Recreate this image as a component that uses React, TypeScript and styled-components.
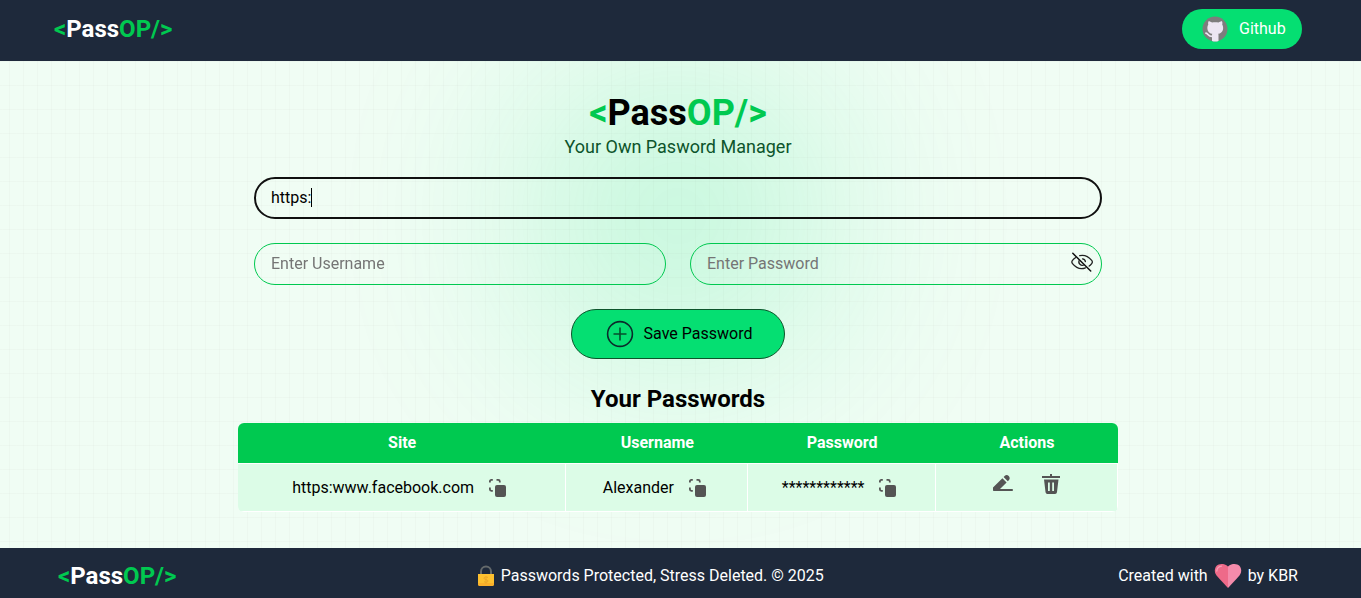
import React, { useState } from "react";
import styled, { createGlobalStyle } from "styled-components";

const GlobalStyle = createGlobalStyle`
  *, *::before, *::after { box-sizing: border-box; }
  body {
    margin: 0;
    font-family: Roboto, "Liberation Sans", sans-serif;
    font-size: 16px;
    line-height: 24px;
    color: #000;
  }
  button, input { font: inherit; color: inherit; }
  h1, h2, p { margin: 0; }
`;

const Page = styled.div`
  min-height: 100vh;
  display: flex;
  flex-direction: column;
`;

const Header = styled.header`
  background: #1e293b;
  color: #fff;
  display: flex;
  align-items: center;
  justify-content: space-between;
  padding: 9px 59px 12px 54px;
`;

const Brand = styled.div<{ $size?: "large" }>`
  font-weight: 700;
  font-size: ${(p) => (p.$size ? "36px" : "24px")};
  line-height: ${(p) => (p.$size ? "40px" : "32px")};
`;

const Accent = styled.span`
  color: #00c950;
`;

const GithubButton = styled.button`
  display: flex;
  align-items: center;
  gap: 10px;
  width: 120px;
  height: 40px;
  padding: 0 0 0 20px;
  border: 0;
  border-radius: 20px;
  background: #05df72;
  color: #fff;
  cursor: pointer;
`;

const Main = styled.main`
  position: relative;
  isolation: isolate;
  overflow: hidden;
  flex: 1;
  padding: 32px 5px 36px 0;
  background-color: #f0fdf4;
  background-image:
    linear-gradient(to right, #8080800a 1px, transparent 1px),
    linear-gradient(to bottom, #8080800a 1px, transparent 1px);
  background-size: 14px 24px;
  background-position: -5px 0;
`;

const Glow = styled.div`
  position: absolute;
  z-index: -1;
  top: 0;
  left: 0;
  right: 5px;
  margin: auto;
  width: 310px;
  height: 310px;
  border-radius: 50%;
  background: #05df72;
  opacity: 0.2;
  filter: blur(100px);
`;

const Content = styled.div`
  max-width: 880px;
  margin: 0 auto;
  text-align: center;
`;

const Tagline = styled.p`
  margin-top: 2px;
  font-size: 18px;
  line-height: 24px;
  color: #0d542b;
`;

const Form = styled.form`
  display: flex;
  flex-direction: column;
  align-items: center;
  gap: 24px;
  margin-top: 18px;
  padding: 0 16px;
`;

const FieldRow = styled.div`
  display: flex;
  gap: 24px;
  width: 100%;
`;

const Field = styled.label`
  position: relative;
  flex: 1;
  display: flex;
`;

const TextInput = styled.input<{ $ownCaret?: boolean }>`
  width: 100%;
  height: 42px;
  padding: 0 16px 2px;
  border: 1px solid #00c950;
  border-radius: 21px;
  background: transparent;
  outline: none;
  caret-color: ${(p) => (p.$ownCaret ? "transparent" : "auto")};
  &::placeholder { color: #757575; opacity: 1; }
  &:focus {
    border: 2px solid #101010;
    padding: 0 15px 2px;
  }
`;

const Caret = styled.span`
  position: absolute;
  top: 11px;
  left: 57px;
  width: 1px;
  height: 19px;
  background: #000;
`;

const EyeButton = styled.button`
  position: absolute;
  top: 8px;
  right: 8px;
  display: flex;
  padding: 0;
  border: 0;
  background: none;
  cursor: pointer;
`;

const SaveButton = styled.button`
  display: flex;
  align-items: center;
  justify-content: center;
  gap: 10px;
  height: 50px;
  padding: 0 32px 0 34px;
  border: 1px solid #0d542b;
  border-radius: 25px;
  background: #05df72;
  cursor: pointer;
`;

const ListTitle = styled.h2`
  margin-top: 24px;
  font-size: 24px;
  line-height: 32px;
`;

const Table = styled.table`
  width: 100%;
  margin-top: 8px;
  border-collapse: separate;
  border-spacing: 0;
  border-radius: 6px;
  overflow: hidden;
`;

const HeadCell = styled.th<{ $width: string }>`
  width: ${(p) => p.$width};
  height: 40px;
  padding: 0;
  background: #00c950;
  color: #fff;
  font-weight: 700;
`;

const Cell = styled.td`
  height: 49px;
  padding: 0;
  background: #dcfce7;
  border: 1px solid #fff;
  border-left: 0;
`;

const CellContent = styled.div<{ $gap: string }>`
  display: flex;
  align-items: center;
  justify-content: center;
  gap: ${(p) => p.$gap};
`;

const IconButton = styled.button`
  display: flex;
  padding: 0;
  border: 0;
  background: none;
  color: #545454;
  cursor: pointer;
`;

const ActionGroup = styled(CellContent)`
  padding-bottom: 8px;
`;

const Footer = styled.footer`
  display: flex;
  align-items: center;
  justify-content: space-between;
  height: 50px;
  padding: 6px 63px 0 58px;
  background: #1e293b;
  color: #fff;
`;

const FooterNote = styled.p`
  display: flex;
  align-items: center;
  gap: 6px;
`;

const Logo = () => (
  <>
    <Accent>&lt;</Accent>Pass<Accent>OP/&gt;</Accent>
  </>
);

const GithubIcon = () => (
  <svg width="27" height="27" viewBox="0 0 27 27" aria-hidden="true">
    <circle cx="13" cy="13" r="12.500" fill="#7d7d7d" />
    <g fill="#ece6f3">
      <path d="M6.500 5.200c1.200 0 2.500.6 3.500 1.300 2-.5 4.500-.5 6.500 0 1-.7 2.300-1.300 3.500-1.300.5 1.200.5 2.400.2 3.400.8 1.200 1 2.600.9 4-.3 4-3 5.600-7.900 5.600s-7.500-1.600-7.800-5.600c-.1-1.400.1-2.800.9-4-.3-1-.3-2.200.2-3.400z" />
      <path d="M11 16.500h4.500c1 1 1 2 1 3.500v5c-2 .7-4.500.7-6.500 0v-5c0-1.500 0-2.500 1-3.500z" />
    </g>
    <path d="M4 17.200c2.300.3 2 3.500 6.500 3.200" fill="none" stroke="#ece6f3" strokeWidth="1.800" strokeLinecap="round" />
  </svg>
);

const EyeOffIcon = () => (
  <svg width="24" height="24" viewBox="0 0 24 24" fill="none" stroke="#222" strokeWidth="1.300" strokeLinecap="round" aria-hidden="true">
    <path d="M2.800 2.300L20.700 20" stroke="#111" strokeWidth="1.500" />
    <path d="M9.700 4.700c5-1.200 9 1.100 12 4.700.8 1 .8 2.200 0 3.200-.8 1-1.600 1.800-2.500 2.500M5.800 6.500C4.500 7.300 3.400 8.300 2.500 9.400c-.8 1-.8 2.200 0 3.200 3.300 4 8 6.200 13 4.200" />
    <path d="M9.400 9c-1.900 3.200 1.700 6.700 4.900 4.800M12.500 7.800c1.700.2 2.700 1.300 2.900 2.900" />
  </svg>
);

const PlusIcon = () => (
  <svg width="28" height="28" viewBox="0 0 28 28" fill="none" aria-hidden="true">
    <circle cx="14" cy="14" r="12.400" stroke="#0b2b2b" strokeWidth="1.600" />
    <path d="M14 7.500v13M7.500 14h13" stroke="#064e2c" strokeWidth="1.600" />
  </svg>
);

const CopyIcon = () => (
  <svg width="24" height="22" viewBox="0 0 24 22" fill="none" aria-hidden="true">
    <rect x="8" y="8" width="11" height="12" rx="2" fill="currentColor" />
    <path
      d="M2.900 5.500V4.400c0-1 .5-1.500 1.500-1.500h1.400M9.500 2.900h1.700c1 0 1.600.5 1.600 1.500v1.200M2.900 10.500v1.800c0 1 .5 1.500 1.500 1.500h1.400"
      stroke="currentColor"
      strokeWidth="1.800"
    />
  </svg>
);

const EditIcon = () => (
  <svg width="20" height="18" viewBox="0 0 20 18" fill="currentColor" aria-hidden="true">
    <path d="M9.400 3.200l4.200 4.200L7 14h12c1.300 0 1.300 2 0 2H1c-.7 0-1-.3-1-1v-2.500z" />
    <path d="M10.600 2l1-.9c1.500-1.500 3-1.100 4.100 0s1.500 2.600.1 4.100l-1 1z" />
  </svg>
);

const TrashIcon = () => (
  <svg width="18" height="20" viewBox="0 0 18 20" fill="currentColor" aria-hidden="true">
    <path d="M0 2h8V0h2v2h8v2H0z" />
    <path
      fillRule="evenodd"
      d="M2 5.500h14.500L15 18c-.2 1.300-.8 2-2 2H5.500c-1.200 0-1.800-.7-2-2zM6 8.500V17h1.800V8.500zm4.200 0V17H12V8.500z"
    />
  </svg>
);

const LockIcon = () => (
  <svg width="24" height="24" viewBox="-6 -1 24 24" aria-hidden="true">
    <path d="M4 10V6.500a5 5 0 0 1 10 0V10" fill="none" stroke="#64696b" strokeWidth="2" />
    <path d="M1 9h16v10c0 1.300-.7 2-2 2H3c-1.300 0-2-.7-2-2z" fill="#fdc02f" />
    <path d="M1 18h16v1c0 1.300-.7 2-2 2H3c-1.300 0-2-.7-2-2z" fill="#fbb02a" />
    <path d="M11 12.500c-1.500-1-4-.7-4 .7 0 1.800 4 1 4 2.800 0 1.400-2.500 1.700-4 .7M9 11.500v7" fill="none" stroke="#eba62b" strokeWidth="1" />
  </svg>
);

const HeartIcon = () => (
  <svg width="28" height="26" viewBox="0 0 28 26" aria-hidden="true">
    <path d="M14 3.500C12 1.300 9.500 1 7.500 1 3.500 1 .8 3.800.8 7.500c0 2.800 1.200 4.500 3 6.500L14 25z" fill="#ee6a89" />
    <path d="M14 3.500C16 1.300 18.500 1 20.500 1c4 0 6.700 2.800 6.700 6.500 0 2.800-1.200 4.500-3 6.500L14 25z" fill="#f48bab" />
    <path d="M2.800 8c.2-2.800 2-4.600 4.700-4.900" fill="none" stroke="#f6a0b5" strokeWidth="1.300" strokeLinecap="round" />
  </svg>
);

const URL_PREFIX = "https:";

const entries = [
  { site: "https:www.facebook.com", username: "Alexander", password: "************" },
];

const columns = [
  { label: "Site", width: "37.3%" },
  { label: "Username", width: "20.7%" },
  { label: "Password", width: "21.3%" },
  { label: "Actions", width: "20.7%" },
];

export default function App() {
  const [site, setSite] = useState(URL_PREFIX);
  const [siteFocused, setSiteFocused] = useState(true);
  const [visible, setVisible] = useState(false);
  const showCaret = siteFocused && site === URL_PREFIX;

  return (
    <Page>
      <GlobalStyle />
      <Header>
        <Brand><Logo /></Brand>
        <GithubButton type="button"><GithubIcon />Github</GithubButton>
      </Header>
      <Main>
        <Glow />
        <Content>
          <Brand as="h1" $size="large"><Logo /></Brand>
          <Tagline>Your Own Pasword Manager</Tagline>
          <Form onSubmit={(e) => e.preventDefault()}>
            <FieldRow>
              <Field>
                <TextInput
                  autoFocus
                  aria-label="Website URL"
                  $ownCaret={showCaret}
                  value={site}
                  onChange={(e) => setSite(e.target.value)}
                  onFocus={() => setSiteFocused(true)}
                  onBlur={() => setSiteFocused(false)}
                />
                {showCaret && <Caret />}
              </Field>
            </FieldRow>
            <FieldRow>
              <Field>
                <TextInput aria-label="Username" placeholder="Enter Username" />
              </Field>
              <Field>
                <TextInput aria-label="Password" type={visible ? "text" : "password"} placeholder="Enter Password" />
                <EyeButton type="button" aria-label="Toggle password visibility" onClick={() => setVisible(!visible)}>
                  <EyeOffIcon />
                </EyeButton>
              </Field>
            </FieldRow>
            <SaveButton type="submit"><PlusIcon />Save Password</SaveButton>
          </Form>
          <ListTitle>Your Passwords</ListTitle>
          <Table>
            <thead>
              <tr>
                {columns.map((c) => <HeadCell key={c.label} $width={c.width}>{c.label}</HeadCell>)}
              </tr>
            </thead>
            <tbody>
              {entries.map((entry) => (
                <tr key={entry.site}>
                  {[entry.site, entry.username, entry.password].map((value) => (
                    <Cell key={value}>
                      <CellContent $gap="13px">
                        {value}
                        <IconButton type="button" aria-label="Copy"><CopyIcon /></IconButton>
                      </CellContent>
                    </Cell>
                  ))}
                  <Cell>
                    <ActionGroup $gap="29px">
                      <IconButton type="button" aria-label="Edit"><EditIcon /></IconButton>
                      <IconButton type="button" aria-label="Delete"><TrashIcon /></IconButton>
                    </ActionGroup>
                  </Cell>
                </tr>
              ))}
            </tbody>
          </Table>
        </Content>
      </Main>
      <Footer>
        <Brand><Logo /></Brand>
        <FooterNote><LockIcon />Passwords Protected, Stress Deleted. © 2025</FooterNote>
        <FooterNote>Created with <HeartIcon /> by KBR</FooterNote>
      </Footer>
    </Page>
  );
}
